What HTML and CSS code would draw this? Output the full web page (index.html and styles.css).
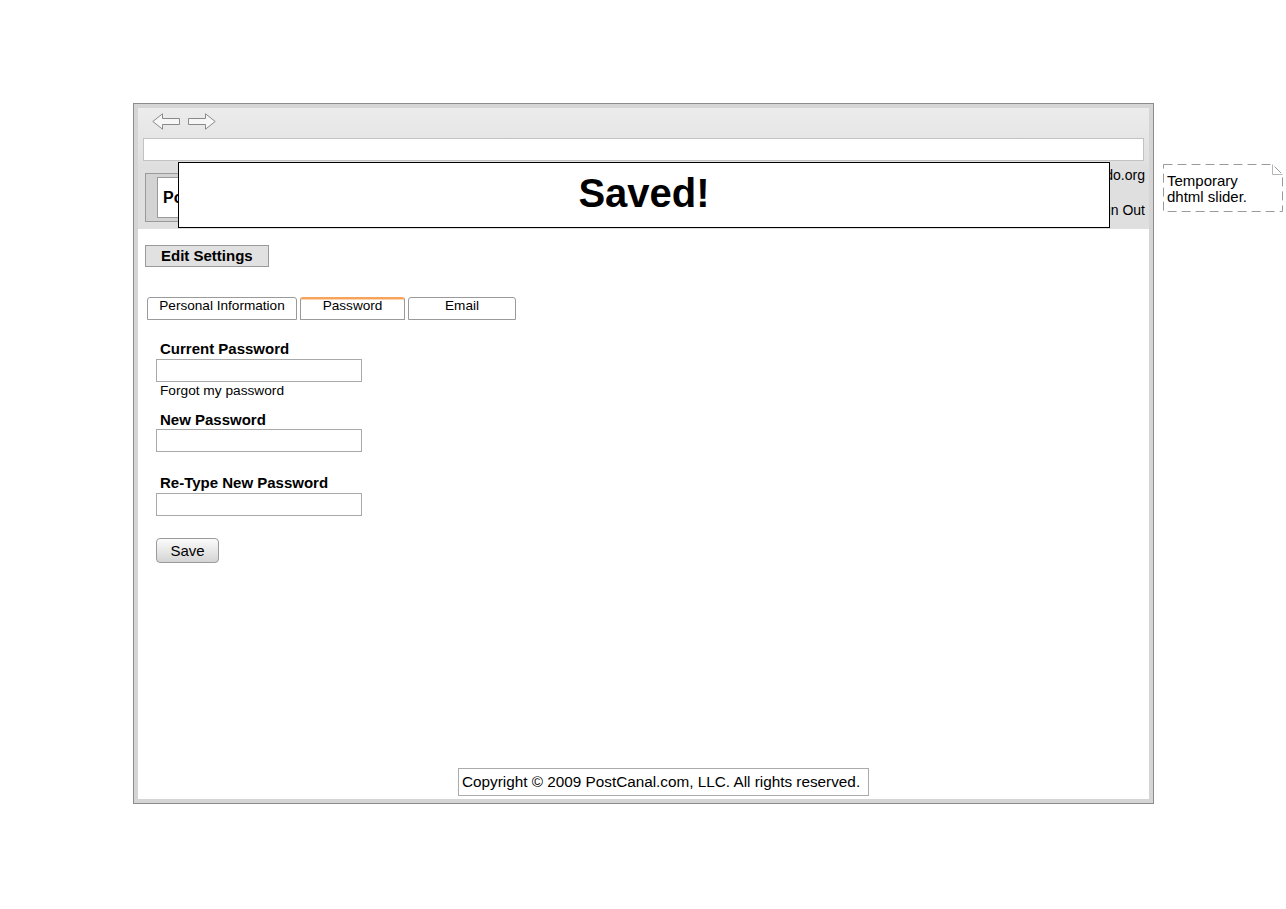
FILE: index.html
```html
<!DOCTYPE html>
<html>
<head>
<meta charset="utf-8">
<link rel="stylesheet" href="styles.css">
</head>
<body>
<div class="canvas">
  <div class="window">
    <div class="toolbar">
      <div class="arrows">
        <svg class="arrow" width="28" height="17" viewBox="0 0 28 17"><path d="M0.8 8.5 L10.5 0.8 L10.5 5.5 L27.5 5.5 L27.5 11.5 L10.5 11.5 L10.5 16.2 Z" fill="#f6f6f6" stroke="#8a8a8a" stroke-width="1"/></svg>
        <svg class="arrow" width="28" height="17" viewBox="0 0 28 17"><path d="M27.2 8.5 L17.5 0.8 L17.5 5.5 L0.5 5.5 L0.5 11.5 L17.5 11.5 L17.5 16.2 Z" fill="#f6f6f6" stroke="#8a8a8a" stroke-width="1"/></svg>
      </div>
      <div class="urlbar"></div>
    </div>
    <div class="content">
      <div class="header">
        <div class="logo-frame">
          <div class="logo-box"><span class="logo-text">PostCanal</span></div>
        </div>
        <div class="user-links">
          <div class="user-email">Logged in as demo@postcanal.do.org</div>
          <div class="user-signout">Sign Out</div>
        </div>
      </div>
      <div class="main">
        <div class="section-title">Edit Settings</div>
        <div class="tabs">
          <div class="tab tab-personal">Personal Information</div>
          <div class="tab tab-password active">Password</div>
          <div class="tab tab-email">Email</div>
        </div>
        <form class="form">
          <label class="field-label">Current Password</label>
          <input class="field-input" type="password">
          <div class="forgot">Forgot my password</div>
          <label class="field-label label-new">New Password</label>
          <input class="field-input" type="password">
          <label class="field-label label-retype">Re-Type New Password</label>
          <input class="field-input" type="password">
          <button class="save-btn" type="button">Save</button>
        </form>
      </div>
      <div class="footer">Copyright © 2009 PostCanal.com, LLC. All rights reserved.</div>
    </div>
    <div class="saved-overlay">Saved!</div>
  </div>
  <div class="note">
    <svg class="note-shape" width="121" height="49" viewBox="0 0 121 49">
      <path d="M0.5 0.5 H109.5 L119.5 10.5 V47.5 H0.5 Z" fill="none" stroke="#9a9a9a" stroke-width="1" stroke-dasharray="9 5"/>
      <path d="M109.5 0.5 V10.5 H119.5" fill="none" stroke="#b5b5b5" stroke-width="1"/>
    </svg>
    <div class="note-text">Temporary<br>dhtml slider.</div>
  </div>
</div>
</body>
</html>
```

FILE: styles.css
```css
* { box-sizing: border-box; }
html, body { margin: 0; padding: 0; background: #fff; }
body { font-family: "Liberation Sans", Arial, sans-serif; color: #000; }

.canvas {
  position: relative;
  width: 1286px;
  height: 909px;
  padding: 103px 0 0 133px;
  overflow: hidden;
}

.window {
  position: relative;
  width: 1021px;
  height: 701px;
  border: 1px solid #8c8c8c;
  background: #d5d5d5;
  padding: 4px;
  display: flex;
  flex-direction: column;
}

.toolbar {
  height: 56px;
  background: linear-gradient(#ececec, #e0e0e0);
  padding: 5px 0 0 0;
}
.arrows { display: flex; gap: 8px; margin-left: 14px; height: 17px; }
.arrow { display: block; }
.urlbar {
  margin: 8px 0 0 5px;
  width: 1001px;
  height: 23px;
  background: #fff;
  border: 1px solid #c2c2c2;
}

.content {
  flex: 1;
  background: #fff;
  display: flex;
  flex-direction: column;
}

.header {
  height: 65px;
  background: #dfdfdf;
  display: flex;
  justify-content: space-between;
}
.logo-frame {
  margin: 9px 0 0 7px;
  width: 220px;
  height: 49px;
  border: 1px solid #9a9a9a;
  background: #d3d3d3;
  padding: 3px 0 0 11px;
}
.logo-box {
  width: 200px;
  height: 41px;
  background: #fff;
  border: 1px solid #9a9a9a;
  padding: 11px 0 0 5px;
}
.logo-text { font-weight: bold; font-size: 16px; color: #000; }

.user-links {
  text-align: right;
  font-size: 14px;
  padding: 3px 4px 0 0;
  line-height: 17px;
}
.user-signout { margin-top: 18px; }

.main { padding: 16px 0 0 7px; }

.section-title {
  width: 124px;
  height: 22px;
  background: #e1e1e1;
  border: 1px solid #9a9a9a;
  font-weight: bold;
  font-size: 15px;
  line-height: 19px;
  padding-left: 15px;
}

.tabs {
  display: flex;
  gap: 3px;
  margin: 30px 0 0 2px;
}
.tab {
  height: 23px;
  border: 1px solid #9a9a9a;
  border-radius: 3px 3px 0 0;
  font-size: 13.6px;
  line-height: 15px;
  text-align: center;
  background: #fff;
}
.tab-personal { width: 150px; }
.tab-password { width: 105px; }
.tab-email { width: 108px; }
.tab.active {
  border-top: 2px solid #f7a35c;
  box-shadow: inset 0 1px 0 #fbd3ae;
  line-height: 14px;
}

.form {
  display: flex;
  flex-direction: column;
  align-items: flex-start;
  margin: 20px 0 0 11px;
}
.field-label {
  font-weight: bold;
  font-size: 15px;
  line-height: 17px;
  padding-left: 4px;
  margin-bottom: 2px;
}
.label-new { margin-top: 13px; margin-bottom: 1px; }
.label-retype { margin-top: 22px; margin-bottom: 2px; }
.field-input {
  width: 206px;
  height: 23px;
  border: 1px solid #a9a9a9;
  background: #fff;
  margin: 0;
  padding: 0;
  font-size: 14px;
  outline: none;
}
.forgot {
  font-size: 13.7px;
  line-height: 15px;
  padding-left: 4px;
  margin-top: 1px;
}
.save-btn {
  margin-top: 22px;
  width: 63px;
  height: 25px;
  border: 1px solid #9a9a9a;
  border-radius: 4px;
  background: linear-gradient(#fbfbfb, #e6e6e6 55%, #d4d4d4);
  font-family: "Liberation Sans", Arial, sans-serif;
  font-size: 15px;
  color: #000;
  padding: 0;
}

.footer {
  margin-top: auto;
  margin-bottom: 3px;
  margin-left: 320px;
  align-self: flex-start;
  width: 411px;
  height: 28px;
  border: 1px solid #ababab;
  font-size: 15.3px;
  line-height: 26px;
  padding-left: 3px;
  white-space: nowrap;
}

.saved-overlay {
  position: absolute;
  left: 44px;
  top: 58px;
  width: 932px;
  height: 66px;
  background: #fff;
  border: 1px solid #000;
  font-weight: bold;
  font-size: 40px;
  line-height: 61px;
  text-align: center;
}

.note {
  position: absolute;
  left: 1163px;
  top: 164px;
  width: 121px;
  height: 49px;
}
.note-shape { position: absolute; left: 0; top: 0; }
.note-text {
  position: relative;
  padding: 9px 0 0 4px;
  font-size: 15px;
  line-height: 16px;
}
```
